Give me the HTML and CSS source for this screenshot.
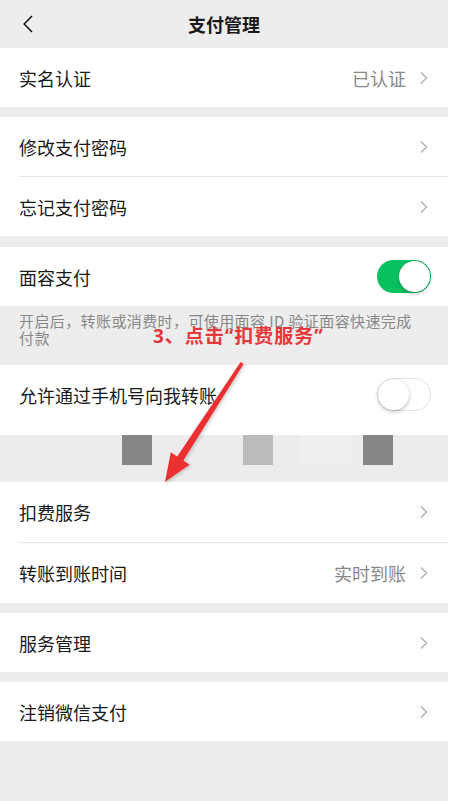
FILE: index.html
```html
<!DOCTYPE html>
<html>

<head>
  <meta charset="utf-8">
  <title>支付管理</title>
  <link rel="stylesheet" href="styles.css">
</head>

<body>
  <div class="page">
    <div class="nav">
      <svg class="back" width="10" height="18" viewBox="0 0 10 18">
        <path d="M9 1L1.2 9L9 17" fill="none" stroke="#1a1a1a" stroke-width="1.6" />
      </svg>
      <div class="nav-title">支付管理</div>
    </div>

    <div class="group">
      <div class="cell">
        <span class="cell-title">实名认证</span>
        <span class="cell-value">已认证</span>
        <svg class="more" width="8" height="14" viewBox="0 0 8 14"><path d="M1 1.5L6.5 7L1 12.5" /></svg>
      </div>
    </div>

    <div class="group">
      <div class="cell">
        <span class="cell-title">修改支付密码</span>
        <svg class="more" width="8" height="14" viewBox="0 0 8 14"><path d="M1 1.5L6.5 7L1 12.5" /></svg>
      </div>
      <div class="cell">
        <span class="cell-title">忘记支付密码</span>
        <svg class="more" width="8" height="14" viewBox="0 0 8 14"><path d="M1 1.5L6.5 7L1 12.5" /></svg>
      </div>
    </div>

    <div class="group wide-gap">
      <div class="cell">
        <span class="cell-title">面容支付</span>
        <span class="switch on"><span class="knob"></span></span>
      </div>
    </div>
    <div class="tips">开启后，转账或消费时，可使用面容 ID 验证面容快速完成付款</div>

    <div class="group flush">
      <div class="cell">
        <span class="cell-title">允许通过手机号向我转账</span>
        <span class="switch"><span class="knob"></span></span>
      </div>
    </div>

    <!-- mosaic strip left by the screenshot editor -->
    <div class="mosaic">
      <div class="mosaic-band">
        <span class="tile dark first"></span>
        <span class="tile light"></span>
        <span class="tile faint"></span>
        <span class="tile dark last"></span>
      </div>
    </div>

    <div class="group flush">
      <div class="cell tall">
        <span class="cell-title">扣费服务</span>
        <svg class="more" width="8" height="14" viewBox="0 0 8 14"><path d="M1 1.5L6.5 7L1 12.5" /></svg>
      </div>
      <div class="cell tall">
        <span class="cell-title">转账到账时间</span>
        <span class="cell-value">实时到账</span>
        <svg class="more" width="8" height="14" viewBox="0 0 8 14"><path d="M1 1.5L6.5 7L1 12.5" /></svg>
      </div>
    </div>

    <div class="group">
      <div class="cell">
        <span class="cell-title">服务管理</span>
        <svg class="more" width="8" height="14" viewBox="0 0 8 14"><path d="M1 1.5L6.5 7L1 12.5" /></svg>
      </div>
    </div>

    <div class="group">
      <div class="cell">
        <span class="cell-title">注销微信支付</span>
        <svg class="more" width="8" height="14" viewBox="0 0 8 14"><path d="M1 1.5L6.5 7L1 12.5" /></svg>
      </div>
    </div>

    <!-- annotation drawn over the screenshot -->
    <div class="note">3、点击“扣费服务”</div>
    <svg class="pointer" width="448" height="801" viewBox="0 0 448 801">
      <polygon points="240.6,362 243.6,364 183.4,460.6 189.6,464.8 165,482 170.8,452.2 177.2,456.4" />
    </svg>
  </div>
</body>

</html>
```

FILE: styles.css
```css
body {
  margin: 0;
  background-color: #fff;
  font-family: 'Noto Sans CJK SC', 'Noto Sans', sans-serif;
  color: #191919;
}

.page {
  position: relative;
  width: 448px;
  height: 801px;
  background-color: #ededed;
  overflow: hidden;
}

.nav {
  height: 48px;
  display: flex;
  align-items: center;
  padding-left: 23px;
}

.nav-title {
  flex: 1;
  margin-right: 33px;
  text-align: center;
  font-size: 18px;
  font-weight: 600;
}

.group {
  background-color: #fff;
  margin-top: 10px;
}

.nav + .group {
  margin-top: 0;
}

.group.wide-gap {
  margin-top: 11px;
}

.group.flush {
  margin-top: 0;
}

.cell {
  height: 59px;
  display: flex;
  align-items: center;
  padding: 0 20px 0 19px;
  font-size: 18px;
}

.cell.tall {
  height: 60px;
}

.cell + .cell {
  border-top: 1px solid #e5e5e5;
  margin-left: 19px;
  padding-left: 0;
}

.cell-title {
  flex: 1;
}

.cell-value {
  color: #888;
  margin-right: 14px;
}

.more path {
  fill: none;
  stroke: #b2b2b2;
  stroke-width: 1.4;
}

.switch {
  position: relative;
  width: 52px;
  height: 31px;
  margin-right: -3px;
  border-radius: 16px;
  border: 1px solid #e2e2e2;
  background-color: #fff;
}

.switch .knob {
  position: absolute;
  top: 0;
  left: 0;
  width: 31px;
  height: 31px;
  border-radius: 50%;
  background-color: #fff;
  box-shadow: 0 2px 4px rgba(0, 0, 0, 0.22), 0 0 1px rgba(0, 0, 0, 0.15);
}

.switch.on {
  background-color: #07c160;
  border-color: #07c160;
}

.switch.on .knob {
  left: 21px;
}

.tips {
  height: 59px;
  box-sizing: border-box;
  padding: 6px 30px 0 19px;
  font-size: 15px;
  line-height: 17px;
  letter-spacing: 0.4px;
  color: #888;
}

.mosaic {
  height: 58px;
  padding-top: 11px;
  box-sizing: border-box;
  background-color: #fff;
}

.mosaic-band {
  height: 47px;
  display: flex;
  background-color: #ececec;
}

.tile {
  width: 30px;
  height: 30px;
}

.tile.dark {
  background-color: #868686;
}

.tile.light {
  background-color: #bbb;
  margin-left: 91px;
}

.tile.faint {
  width: 53px;
  margin-left: 27px;
  background-color: #efefef;
}

.tile.first {
  margin-left: 122px;
}

.tile.last {
  margin-left: 10px;
}

.note {
  position: absolute;
  left: 153px;
  top: 329px;
  font-family: 'Noto Sans', 'Noto Sans CJK SC', sans-serif;
  font-size: 19px;
  font-weight: 700;
  line-height: 15px;
  letter-spacing: 1px;
  color: #e5383b;
}

.pointer {
  position: absolute;
  top: 0;
  left: 0;
  pointer-events: none;
  filter: drop-shadow(0 0 1.5px rgba(255, 255, 255, 0.9)) drop-shadow(1px 1px 1px rgba(0, 0, 0, 0.25));
}

.pointer polygon {
  fill: #ea3030;
}
```
